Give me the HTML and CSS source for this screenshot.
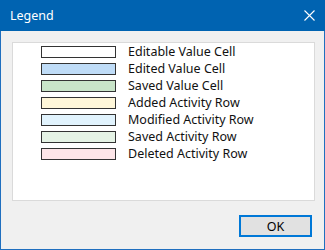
FILE: index.html
```html
<!DOCTYPE html>
<html lang="en">
<head>
	<meta charset="UTF-8">
	<title>Legend</title>
	<link rel="stylesheet" href="styles.css">
</head>
<body>
	<div class="window">
		<div class="titlebar">
			<span class="title">Legend</span>
			<svg class="close" width="11" height="11" viewBox="0 0 11 11">
				<path d="M0.5 0.5 L10.5 10.5 M10.5 0.5 L0.5 10.5" stroke="#fff" stroke-width="1.1" fill="none"/>
			</svg>
		</div>
		<div class="client">
			<div class="panel">
				<div class="row"><span class="swatch editable"></span><span class="label">Editable Value Cell</span></div>
				<div class="row"><span class="swatch edited"></span><span class="label">Edited Value Cell</span></div>
				<div class="row"><span class="swatch saved-cell"></span><span class="label">Saved Value Cell</span></div>
				<div class="row"><span class="swatch added"></span><span class="label">Added Activity Row</span></div>
				<div class="row"><span class="swatch modified"></span><span class="label">Modified Activity Row</span></div>
				<div class="row"><span class="swatch saved-row"></span><span class="label">Saved Activity Row</span></div>
				<div class="row"><span class="swatch deleted"></span><span class="label">Deleted Activity Row</span></div>
			</div>
			<div class="buttons">
				<button class="ok">OK</button>
			</div>
		</div>
	</div>
</body>
</html>
```

FILE: styles.css
```css
*{
	margin: 0;
	padding: 0;
	box-sizing: border-box;
}
body{
	font-family: "Noto Sans", "Open Sans", sans-serif;
	font-size: 12px;
	color: #000;
	background: #fff;
}
	.window{
		width: 325px;
		height: 250px;
		display: flex;
		flex-direction: column;
	}
	.titlebar{
		height: 31px;
		background: #0063b1;
		display: flex;
		align-items: center;
		padding: 0 10px 0 10px;
		color: #fff;
	}
	.title{
		flex: 1;
		font-size: 12.5px;
		margin-top: -1px;
	}
	.close{
		display: block;
		margin-top: -1px;
	}
	.client{
		flex: 1;
		background: #f0f0f0;
		border: 1px solid #1f6fbf;
		border-top: none;
		padding: 11px 0 12px 11px;
		display: flex;
		flex-direction: column;
	}
	.panel{
		width: 303px;
		height: 159px;
		background: #fff;
		border: 1px solid #dadada;
		padding-top: 1px;
	}
	.row{
		height: 17px;
		display: flex;
		align-items: flex-start;
		padding-left: 28px;
	}
	.swatch{
		width: 75px;
		height: 12px;
		margin-top: 2px;
		border: 1px solid #333;
	}
	.label{
		margin-left: 12px;
		font-size: 12.5px;
		line-height: 16px;
		color: #111;
		white-space: nowrap;
	}
	.editable{ background: #ffffff; }
	.edited{ background: #bfdcf7; }
	.saved-cell{ background: #c8e4c8; }
	.added{ background: #fff7d9; }
	.modified{ background: #e1f3fd; }
	.saved-row{ background: #e5f3e5; }
	.deleted{ background: #fde5e8; }
	.buttons{
		margin-top: 14px;
		display: flex;
		justify-content: flex-end;
		padding-right: 12px;
	}
	.ok{
		width: 73px;
		height: 22px;
		background: #e1e1e1;
		border: 2px solid #0078d7;
		font-family: "Noto Sans", "Open Sans", sans-serif;
		font-size: 12.5px;
		color: #000;
	}
```
